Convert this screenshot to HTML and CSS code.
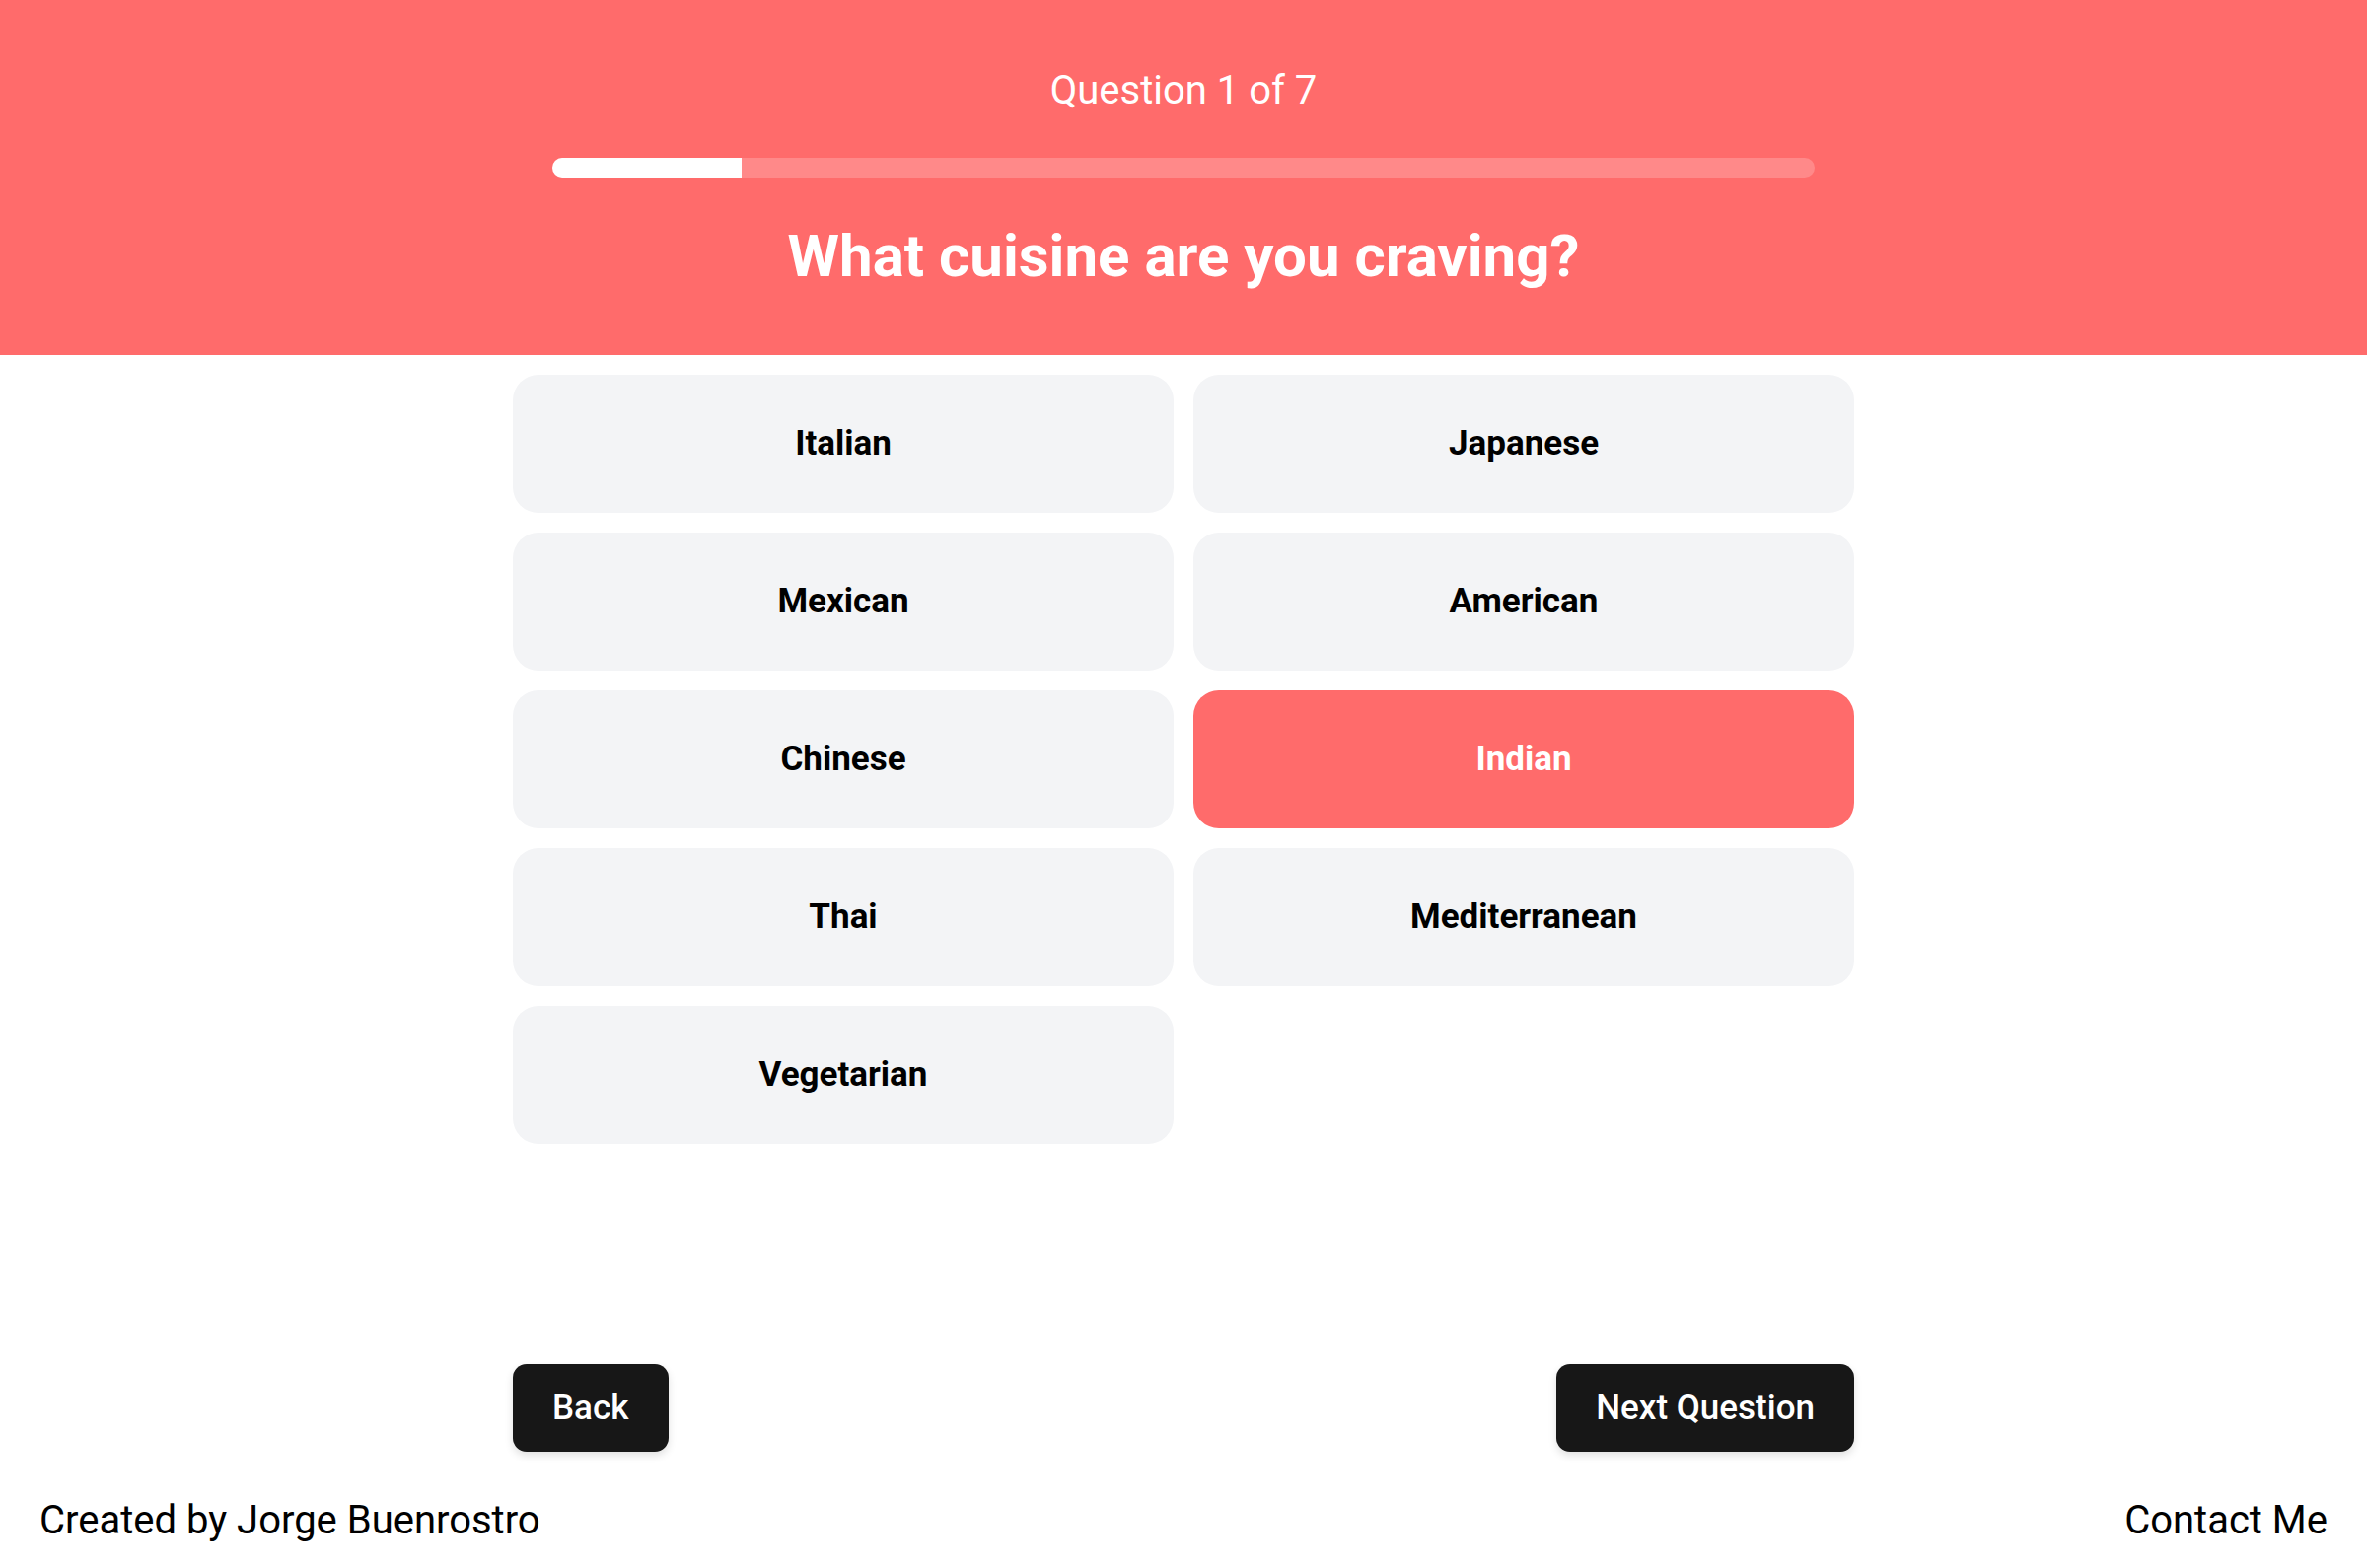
FILE: index.html
```html
<!DOCTYPE html>
<html lang="en">
<head>
<meta charset="utf-8">
<title>Cuisine Quiz</title>
<link rel="stylesheet" href="styles.css">
</head>
<body>
<div class="page">
  <header class="hero">
    <p class="counter">Question 1 of 7</p>
    <div class="track"><div class="fill" style="width: 15%"></div></div>
    <h1 class="title">What cuisine are you craving?</h1>
  </header>
  <main class="main">
    <div class="options">
      <button class="option">Italian</button>
      <button class="option">Japanese</button>
      <button class="option">Mexican</button>
      <button class="option">American</button>
      <button class="option">Chinese</button>
      <button class="option selected">Indian</button>
      <button class="option">Thai</button>
      <button class="option">Mediterranean</button>
      <button class="option">Vegetarian</button>
    </div>
    <nav class="nav">
      <button class="navbtn">Back</button>
      <button class="navbtn">Next Question</button>
    </nav>
  </main>
  <footer class="footer">
    <span>Created by Jorge Buenrostro</span>
    <span>Contact Me</span>
  </footer>
</div>
</body>
</html>
```

FILE: styles.css
```css
* { box-sizing: border-box; }
html, body { margin: 0; padding: 0; }
body {
  font-family: Roboto, "Liberation Sans", sans-serif;
  background: #ffffff;
  color: #000000;
}
.page {
  display: flex;
  flex-direction: column;
  min-height: 100vh;
}
.hero {
  background: #ff6b6b;
  height: 360px;
  padding-top: 68px;
  display: flex;
  flex-direction: column;
  align-items: center;
  color: #ffffff;
}
.counter {
  margin: 0;
  font-size: 40px;
  line-height: 47px;
  font-weight: 400;
}
.track {
  margin-top: 45px;
  width: 1280px;
  height: 20px;
  border-radius: 10px;
  background: #ff8989;
  overflow: hidden;
}
.fill {
  height: 100%;
  background: #ffffff;
}
.title {
  margin: 45px 0 0;
  font-size: 60px;
  line-height: 70px;
  font-weight: 700;
}
.main {
  flex: 1;
  width: 1360px;
  margin: 0 auto;
  padding-top: 20px;
  display: flex;
  flex-direction: column;
}
.options {
  display: grid;
  grid-template-columns: 1fr 1fr;
  gap: 20px;
}
.option {
  height: 140px;
  border: none;
  border-radius: 26px;
  background: #f3f4f6;
  font-family: inherit;
  font-size: 35px;
  font-weight: 700;
  color: #000000;
  padding: 0 0 2px;
}
.option.selected {
  background: #ff6b6b;
  color: #ffffff;
}
.nav {
  margin-top: auto;
  margin-bottom: 46px;
  display: flex;
  justify-content: space-between;
}
.navbtn {
  height: 89px;
  padding: 0 40px;
  border: none;
  border-radius: 14px;
  background: #171717;
  color: #ffffff;
  font-family: inherit;
  font-size: 35px;
  font-weight: 500;
  box-shadow: 0 4px 8px rgba(0, 0, 0, 0.12);
}
.footer {
  display: flex;
  justify-content: space-between;
  padding: 0 40px 25px;
  font-size: 40px;
  line-height: 47px;
  color: #000000;
}
```
